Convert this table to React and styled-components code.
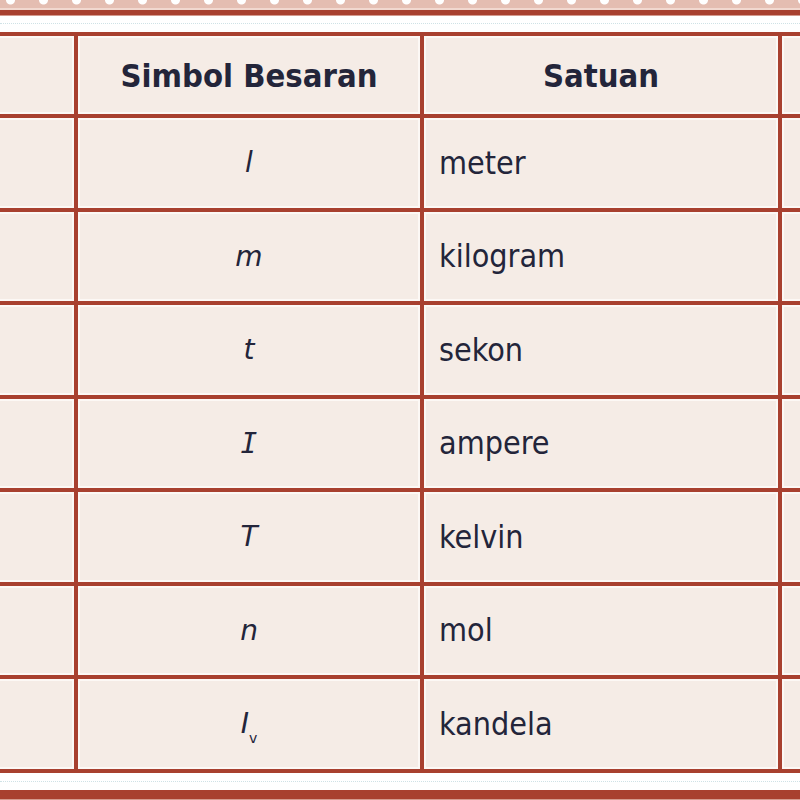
import React from 'react';
import styled, { createGlobalStyle } from 'styled-components';

const RED = '#a8402f';
const CELL = '#f5ece6';
const INK = '#23253a';

const GlobalStyle = createGlobalStyle`
  html, body {
    margin: 0;
    padding: 0;
    background: #ffffff;
  }
  body {
    font-family: "DejaVu Sans Condensed", "DejaVu Sans", sans-serif;
    color: ${INK};
  }
`;

const rows = [
  { symbol: 'l', unit: 'meter' },
  { symbol: 'm', unit: 'kilogram' },
  { symbol: 't', unit: 'sekon' },
  { symbol: 'I', unit: 'ampere', serif: true },
  { symbol: 'T', unit: 'kelvin' },
  { symbol: 'n', unit: 'mol' },
  { symbol: 'I', sub: 'v', unit: 'kandela' },
];

const App = () => (
  <Page>
    <GlobalStyle />
    <DotBand />
    <Rule />
    <Gutter />
    <Frame>
      <Table>
        <Cell />
        <HeadCell>Simbol Besaran</HeadCell>
        <HeadCell>Satuan</HeadCell>
        <Cell />
        {rows.map((row) => (
          <React.Fragment key={row.unit}>
            <Cell />
            <SymbolCell>
              <Symbol $serif={row.serif}>
                {row.symbol}
                {row.sub && <Sub>{row.sub}</Sub>}
              </Symbol>
            </SymbolCell>
            <UnitCell>{row.unit}</UnitCell>
            <Cell />
          </React.Fragment>
        ))}
      </Table>
    </Frame>
    <Gutter />
    <Rule $tall />
  </Page>
);

const Page = styled.div`
  width: 800px;
  height: 800px;
  overflow: hidden;
  display: flex;
  flex-direction: column;
`;

// pink strip of half-cut white dots along the very top
const DotBand = styled.div`
  height: 8px;
  flex: none;
  background:
    radial-gradient(circle at 50% 0, #ffffff 4px, rgba(255, 255, 255, 0) 5px) -6px 0 / 33px 8px repeat-x,
    #e4bdb1;
  border-bottom: 2px solid #f1d8cf;
`;

const Rule = styled.div`
  flex: none;
  height: ${(p) => (p.$tall ? '9px' : '5px')};
  background: ${RED};
  box-shadow: 0 1px 0 #d49a8e;
`;

const Gutter = styled.div`
  flex: none;
  height: 17px;
  display: flex;
  align-items: center;

  &::after {
    content: '';
    flex: 1;
    border-top: 1px dotted #cfe2e6;
  }
`;

const Frame = styled.div`
  flex: none;
  width: 800px;
  overflow: hidden;
`;

const Table = styled.div`
  display: grid;
  grid-template-columns: 270px 342px 354px 200px;
  grid-template-rows: 78px repeat(7, 89.5px);
  gap: 4px;
  padding: 4px;
  margin-left: -200px;
  width: max-content;
  background: ${RED};
`;

const Cell = styled.div`
  background: ${CELL};
  box-shadow: inset 0 0 0 2px #fcf8f5;
  display: flex;
  align-items: center;
`;

const HeadCell = styled(Cell)`
  justify-content: center;
  font-weight: bold;
  font-size: 32.5px;
  padding-top: 2px;
`;

const SymbolCell = styled(Cell)`
  justify-content: center;
`;

// the ampere "I" carries slab serifs in the source, so it gets the mono face
const Symbol = styled.span`
  font-style: italic;
  font-size: 28px;
  font-family: ${(p) =>
    p.$serif ? '"DejaVu Sans Mono", "Liberation Mono", monospace' : '"DejaVu Sans", sans-serif'};
`;

const Sub = styled.sub`
  font-size: 14px;
  font-style: normal;
  line-height: 0;
  vertical-align: -10px;
`;

const UnitCell = styled(Cell)`
  padding-left: 15px;
  font-size: 32px;
`;

export default App;
